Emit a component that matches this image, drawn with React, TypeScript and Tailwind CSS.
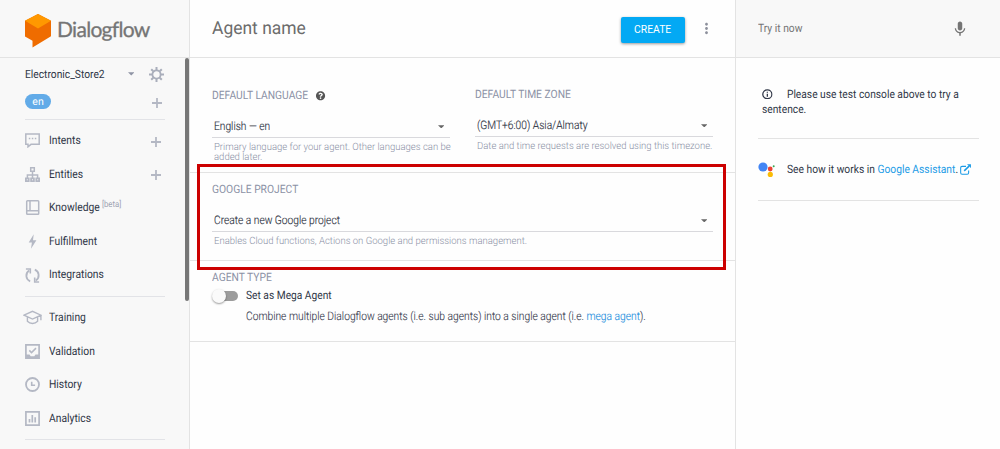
import React from 'react';
import { FaQuestionCircle } from 'react-icons/fa';
import { MdMic, MdMoreVert } from 'react-icons/md';

const Svg = ({ children, className = 'size-[15px]', box = '0 0 15 15' }: { children: React.ReactNode; className?: string; box?: string }) => (
  <svg viewBox={box} className={`shrink-0 ${className}`} fill="none" stroke="currentColor" strokeWidth="1.5">
    {children}
  </svg>
);

const Caret = ({ className = '' }: { className?: string }) => (
  <svg viewBox="0 0 8 4" className={`h-[3.5px] w-[6.5px] shrink-0 ${className}`} fill="currentColor"><path d="M0 0h8L4 4z" /></svg>
);

const Plus = () => (
  <Svg className="size-[10px]" box="0 0 10 10"><path d="M5 0v10M0 5h10" strokeWidth="1.8" /></Svg>
);

const Gear = () => (
  <Svg className="size-[15px]">
    <circle cx="7.5" cy="7.5" r="4.1" strokeWidth="1.8" />
    <path d="M7.5 0v3M7.5 12v3M0 7.5h3M12 7.5h3M2.2 2.2l2.1 2.1M10.7 10.7l2.1 2.1M12.8 2.2l-2.1 2.1M4.3 10.7l-2.1 2.1" strokeWidth="2" />
  </Svg>
);

const icons = {
  intents: <Svg><path d="M.8.9h13.4v10.4H6L3 13.8v-2.5H.8z" /><path d="M3.8 5.6h1.5m1.5 0h1.5m1.5 0h1.5" /></Svg>,
  entities: (
    <Svg>
      <path d="M5.7.8h3.6v3.4H5.7zM7.5 4.2V11M2.4 11V7.9h10.2V11" />
      <path d="M0 10.5h4.6V15H0zM5.2 10.5h4.6V15H5.2zM10.4 10.5H15V15h-4.6z" fill="currentColor" stroke="none" />
      <path d="M1.8 12.2h1v1h-1zM7 12.2h1v1H7zM12.2 12.2h1v1h-1z" fill="#f7f7f7" stroke="none" />
    </Svg>
  ),
  knowledge: <Svg><rect x="1.7" y=".8" width="12" height="13.4" rx=".8" /><path d="M5 .8v10M1.7 10.8h12" /></Svg>,
  fulfillment: <Svg><path d="M8.7.3 3.7 8.4h3.2L6 14.7l5.4-8.5H8z" fill="currentColor" stroke="none" /></Svg>,
  integrations: (
    <Svg>
      <path d="M5.2 13.3A6 6 0 0 1 4.2 2.6M9.8 1.7a6 6 0 0 1 1 10.7" strokeWidth="1.8" />
      <path d="M.9 1h4.4v4.6M14.1 14H9.7V9.4" strokeWidth="1.6" />
    </Svg>
  ),
  training: (
    <Svg className="-ml-[2px] h-[15px] w-[19px]" box="0 0 19 15">
      <path d="M1 5.2 9.5 1.3 18 5.2 9.5 9.1zM4.4 7v4.2c2.8 3 7.4 3 10.2 0V7M17.9 5.2v5" strokeWidth="1.4" />
    </Svg>
  ),
  validation: (
    <Svg>
      <path d="M.9.9h13.2v13.2H.9z" strokeWidth="1.7" />
      <path d="M4.3 6.4l2.2 2.2L11 4.1" />
      <path d="M1 10.4h3.5l1.2 1.8h3.6l1.2-1.8H14V14H1z" fill="currentColor" stroke="none" />
    </Svg>
  ),
  history: <Svg><circle cx="7.5" cy="7.5" r="6.5" strokeWidth="1.8" /><path d="M6.7 4.8v3.5h3.4" strokeWidth="1.6" /></Svg>,
  analytics: <Svg><path d="M.9.9h13.2v13.2H.9z" strokeWidth="1.7" /><path d="M4.5 8v3.6M7.3 4v7.6M10.2 6.3v5.3" strokeWidth="1.7" /></Svg>,
};

type Item = { icon: React.ReactNode; label: string; add?: boolean; beta?: boolean };

const mainItems: Item[] = [
  { icon: icons.intents, label: 'Intents', add: true },
  { icon: icons.entities, label: 'Entities', add: true },
  { icon: icons.knowledge, label: 'Knowledge', beta: true },
  { icon: icons.fulfillment, label: 'Fulfillment' },
  { icon: icons.integrations, label: 'Integrations' },
];

const reviewItems: Item[] = [
  { icon: icons.training, label: 'Training' },
  { icon: icons.validation, label: 'Validation' },
  { icon: icons.history, label: 'History' },
  { icon: icons.analytics, label: 'Analytics' },
];

const NavRow = ({ item }: { item: Item }) => (
  <li className="flex h-[33.6px] items-center pr-[4px] text-[#b4b8c4]">
    <span className="flex w-[24.5px] shrink-0">{item.icon}</span>
    <span className="-ml-[0.1px] flex origin-left scale-x-[0.882] items-center text-[11.7px] text-[#2f3646]">
      {item.label}
      {item.beta && <span className="mb-[4px] ml-[2.5px] text-[8.8px] text-[#9fa4b3]">[beta]</span>}
    </span>
    {item.add && <span className="mt-[2px] ml-auto"><Plus /></span>}
  </li>
);

const Sidebar = () => (
  <aside className="flex w-[190px] shrink-0 flex-col border-r border-[#e3e3e3] bg-[#f8f8f8]">
    <div className="flex h-[58px] shrink-0 items-center border-b border-[#e3e3e3] pl-[25px]">
      <svg viewBox="0 0 26 34" className="mt-[4px] h-[34px] w-[26px] shrink-0">
        <path d="M13 0 26 6.8v15.4L7.5 33.4v-6.7L0 22.4V6.8z" fill="#ef6c00" />
        <path d="M13 0 26 6.8 13 14.4 0 6.8z" fill="#ff9800" />
      </svg>
      <span className="mt-[2px] ml-[6px] font-[Lato,sans-serif] text-[21px] tracking-[-0.7px] text-[#757575] [-webkit-text-stroke:0.3px_#757575]">Dialogflow</span>
    </div>
    <div className="flex grow">
      <div className="flex w-[165px] flex-col pl-[25px]">
        <div className="flex h-[32px] shrink-0 items-center">
          <span className="origin-left scale-x-[0.9] pt-[1px] text-[11.4px] text-[#2f3646]">Electronic_Store2</span>
          <Caret className="mr-[15px] ml-auto text-[#8f94a5]" />
          <span className="mr-[1px] text-[#a9aebb]"><Gear /></span>
        </div>
        <div className="flex h-[29px] shrink-0 justify-between pt-[4px] pr-[3px]">
          <span className="flex h-[15px] w-[26px] items-center justify-center rounded-full bg-[#62abe8] text-[10.5px] text-white">en</span>
          <span className="mt-[4px] text-[#b4b8c4]"><Plus /></span>
        </div>
        <hr className="mb-[4px] border-[#e2e3e7]" />
        <ul>{mainItems.map((i) => <NavRow key={i.label} item={i} />)}</ul>
        <hr className="mt-[4px] mb-[4px] border-[#e2e3e7]" />
        <ul>{reviewItems.map((i) => <NavRow key={i.label} item={i} />)}</ul>
        <hr className="mt-[4px] border-[#e2e3e7]" />
      </div>
      <div className="ml-auto h-[243px] w-[4px] rounded-full bg-[#777]" />
    </div>
  </aside>
);

const Label = ({ children }: { children: React.ReactNode }) => (
  <h2 className="flex h-[14px] w-max origin-left scale-x-[0.895] items-center text-[11.5px] whitespace-nowrap text-[#8b91a5]">{children}</h2>
);

const Select = ({ value, hint }: { value: string; hint: string }) => (
  <div>
    <div className="flex h-[24px] items-center justify-between border-b border-[#d9d9dd] pr-[6px] pl-[1.5px] text-[11.7px] text-[#2f3443]">
      <span className="mt-[3px] origin-left scale-x-[0.874] font-light [-webkit-text-stroke:0.15px_currentColor]">{value}</span>
      <Caret className="mt-[2px] text-[#666]" />
    </div>
    <p className="mt-[5px] ml-[1.5px] w-max origin-left scale-x-[0.952] text-[10px] leading-[9.5px] font-light whitespace-pre text-[#8a90a5]">{hint}</p>
  </div>
);

const Main = () => (
  <main className="flex w-[545px] shrink-0 flex-col bg-[#fefefe]">
    <header className="flex h-[58px] shrink-0 items-center border-b border-[#e3e3e3] pl-[22px]">
      <h1 className="origin-left scale-x-[0.97] text-[18px] text-[#6c6c6c]">Agent name</h1>
      <button className="mt-[3px] ml-auto h-[26px] w-[64px] rounded-[2px] bg-[#03a9f4] text-[11.5px] text-white shadow-[0_1px_3px_rgba(0,0,0,0.4)]">
        <span className="inline-block scale-x-[0.9]">CREATE</span>
      </button>
      <MdMoreVert className="mr-[20px] ml-[13px] size-[17px] text-[#8d909c]" />
    </header>
    <section className="flex h-[115px] shrink-0 justify-between border-b border-[#e3e3e3] pr-[22px] pl-[22px]">
      <div className="w-[238px] pt-[31px]">
        <Label>DEFAULT LANGUAGE<FaQuestionCircle className="ml-[9px] h-[9.5px] w-[10.6px] text-[#555]" preserveAspectRatio="none" /></Label>
        <div className="pt-[11px]"><Select value="English — en" hint={'Primary language for your agent. Other languages can be\nadded later.'} /></div>
      </div>
      <div className="w-[238px] pt-[30px]">
        <Label>DEFAULT TIME ZONE</Label>
        <div className="pt-[11px]"><Select value="(GMT+6:00) Asia/Almaty" hint="Date and time requests are resolved using this timezone." /></div>
      </div>
    </section>
    <section className="relative h-[88px] shrink-0 border-b border-[#e3e3e3] px-[22px] pt-[10px]">
      <Label>GOOGLE PROJECT</Label>
      <div className="pt-[11px]"><Select value="Create a new Google project" hint="Enables Cloud functions, Actions on Google and permissions management." /></div>
      <div className="pointer-events-none absolute -top-[9px] left-[7px] h-[106px] w-[529px] border-[3px] border-[#cc0000]" />
    </section>
    <section className="h-[81px] shrink-0 border-b border-[#e3e3e3] pl-[22px] pt-[10px]">
      <Label>AGENT TYPE</Label>
      <div className="mt-[2px] flex h-[17px] items-center">
        <span className="flex h-[10px] w-[26px] items-center rounded-full bg-[linear-gradient(to_right,transparent_5px,#9c9c9c_5px)]">
          <span className="size-[14px] shrink-0 rounded-full bg-[#fafafa] shadow-[0_1px_2px_rgba(0,0,0,0.4)]" />
        </span>
        <span className="ml-[7.5px] origin-left scale-x-[0.888] text-[11.5px] text-[#2f3646]">Set as Mega Agent</span>
      </div>
      <p className="mt-[4px] ml-[33.5px] w-max origin-left scale-x-[0.877] text-[11.7px] leading-[16px] font-light whitespace-nowrap text-[#3a4050] [-webkit-text-stroke:0.12px_currentColor]">
        Combine multiple Dialogflow agents (i.e. sub agents) into a single agent (i.e. <a className="text-[#1f90e0]">mega agent</a>).
      </p>
    </section>
  </main>
);

const Console = () => (
  <aside className="flex w-[265px] shrink-0 flex-col border-l border-[#e3e3e3] bg-[#fefefe]">
    <div className="flex h-[58px] shrink-0 items-center justify-between border-b border-[#e3e3e3] bg-[#f8f8f8] pr-[31px] pl-[22px] text-[#757575]">
      <span className="origin-left scale-x-[0.895] text-[11.5px]">Try it now</span>
      <MdMic className="size-[18px]" />
    </div>
    <div className="mr-[21px] ml-[22px] flex flex-col text-[11.5px] leading-[15px] whitespace-nowrap text-[#2f3646]">
      <div className="h-[81px] border-b border-[#e3e3e3] pt-[29px] pl-[4px]">
        <p className="w-max origin-left scale-x-[0.89]">
          <svg viewBox="0 0 11 11" preserveAspectRatio="none" className="mr-[16px] inline h-[10.5px] w-[12px] align-[-1px]" fill="none" stroke="currentColor" strokeWidth="1.3">
            <circle cx="5.5" cy="5.5" r="4.7" />
            <path d="M5.5 5v3.1M5.5 2.8V4" />
          </svg>
          Please use test console above to try a<br />sentence.
        </p>
      </div>
      <div className="flex h-[62px] items-center border-b border-[#e3e3e3]">
        <svg viewBox="0 0 17 15" className="h-[15px] w-[17px] shrink-0">
          <circle cx="5" cy="5" r="4.6" fill="#4285f4" /><circle cx="12.2" cy="7" r="2.4" fill="#ea4335" />
          <circle cx="12.3" cy="12.4" r="2.6" fill="#fbbc05" /><circle cx="15.7" cy="4.2" r="1" fill="#34a853" />
        </svg>
        <span className="ml-[11.5px] flex origin-left scale-x-[0.892] items-center">
          <span>See how it works in <a className="text-[#1a9be6]">Google Assistant</a>.</span>
          <svg viewBox="0 0 11 11" preserveAspectRatio="none" className="mb-[1px] ml-[2.5px] h-[11px] w-[12.3px] shrink-0 text-[#1a9be6]" fill="none" stroke="currentColor" strokeWidth="1.1">
            <path d="M6 2.4H2A1.4 1.4 0 0 0 .6 3.8v5A1.4 1.4 0 0 0 2 10.2h5.2a1.4 1.4 0 0 0 1.4-1.4V6.4" />
            <path d="M4.2 6.9 9 2.1" strokeWidth="1.5" />
            <path d="M7 .2h3.9v3.9z" fill="currentColor" stroke="none" />
          </svg>
        </span>
      </div>
    </div>
  </aside>
);

export default function App() {
  return (
    <div className="flex h-[449px] w-[1000px] overflow-hidden font-[Roboto,sans-serif] [text-rendering:geometricPrecision]">
      <Sidebar />
      <Main />
      <Console />
    </div>
  );
}
